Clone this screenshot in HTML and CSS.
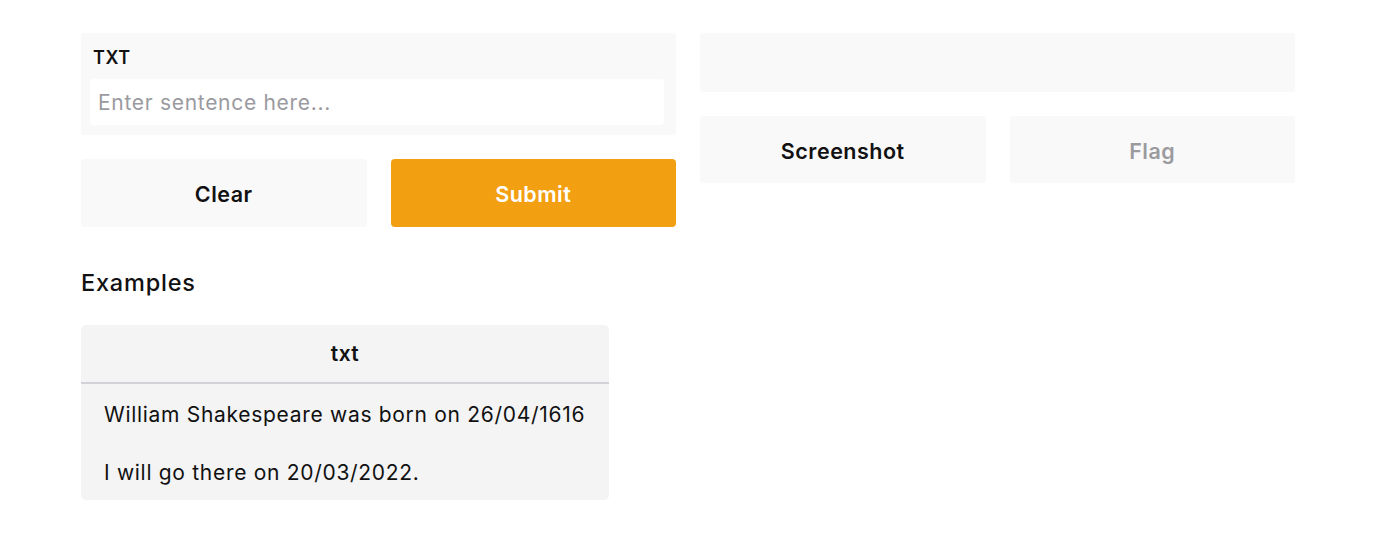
FILE: index.html
```html
<!DOCTYPE html>
<html>
<head>
<meta charset="utf-8">
<link rel="stylesheet" href="styles.css">
</head>
<body>
<div class="page">
  <div class="cols">
    <div class="col">
      <div class="panel input-panel">
        <div class="label">TXT</div>
        <div class="textbox"><span class="placeholder">Enter sentence here...</span></div>
      </div>
      <div class="btn-row">
        <div class="btn">Clear</div>
        <div class="btn primary">Submit</div>
      </div>
    </div>
    <div class="col">
      <div class="panel output-panel"></div>
      <div class="btn-row small">
        <div class="btn">Screenshot</div>
        <div class="btn muted">Flag</div>
      </div>
    </div>
  </div>
  <div class="examples">
    <div class="ex-title">Examples</div>
    <div class="table">
      <div class="thead">txt</div>
      <div class="row">William Shakespeare was born on 26/04/1616</div>
      <div class="row">I will go there on 20/03/2022.</div>
    </div>
  </div>
</div>
</body>
</html>
```

FILE: styles.css
```css
* { box-sizing: border-box; }
body {
  margin: 0;
  background: #ffffff;
  font-family: Inter, "Liberation Sans", sans-serif;
  color: #111111;
}
.page {
  padding: 33px 105px 0 81px;
}
.cols {
  display: flex;
  gap: 24px;
}
.col {
  width: 595px;
  display: flex;
  flex-direction: column;
  gap: 24px;
}
.panel {
  background: #f9f9f9;
  border-radius: 3px;
}
.input-panel {
  height: 102px;
  padding: 14px 12px 10px 9px;
  display: flex;
  flex-direction: column;
}
.label {
  font-size: 18px;
  font-weight: 600;
  letter-spacing: 0.6px;
  padding-left: 3px;
  height: 32px;
  line-height: 22px;
}
.textbox {
  background: #ffffff;
  border-radius: 4px;
  height: 46px;
  display: flex;
  align-items: center;
  padding-left: 8px;
}
.placeholder {
  color: #9a9aa0;
  font-size: 21px;
  letter-spacing: 0.7px;
}
.output-panel {
  height: 59px;
}
.btn-row {
  display: flex;
  gap: 24px;
}
.btn {
  flex: 1;
  height: 68px;
  background: #f9f9f9;
  border-radius: 3px;
  display: flex;
  align-items: center;
  justify-content: center;
  padding-top: 2px;
  font-size: 21.5px;
  font-weight: 600;
  letter-spacing: 0.5px;
  color: #111111;
}
.btn-row.small .btn { height: 67px; }
.btn.primary {
  background: #f39f12;
  color: #ffffff;
  border-radius: 4px;
}
.btn.muted { color: #9b9b9f; }
.examples {
  margin-top: 40px;
}
.ex-title {
  font-size: 23.5px;
  font-weight: 500;
  letter-spacing: 0.8px;
  line-height: 32px;
}
.table {
  margin-top: 26px;
  width: 528px;
  background: #f4f4f5;
  border-radius: 5px;
  overflow: hidden;
}
.thead {
  height: 59px;
  border-bottom: 2px solid #d1d1d6;
  display: flex;
  align-items: center;
  justify-content: center;
  font-size: 21px;
  font-weight: 600;
  letter-spacing: 0.4px;
}
.row {
  height: 58px;
  display: flex;
  align-items: center;
  padding-left: 23px;
  padding-top: 2px;
  font-size: 21px;
  letter-spacing: 0.7px;
}
```
